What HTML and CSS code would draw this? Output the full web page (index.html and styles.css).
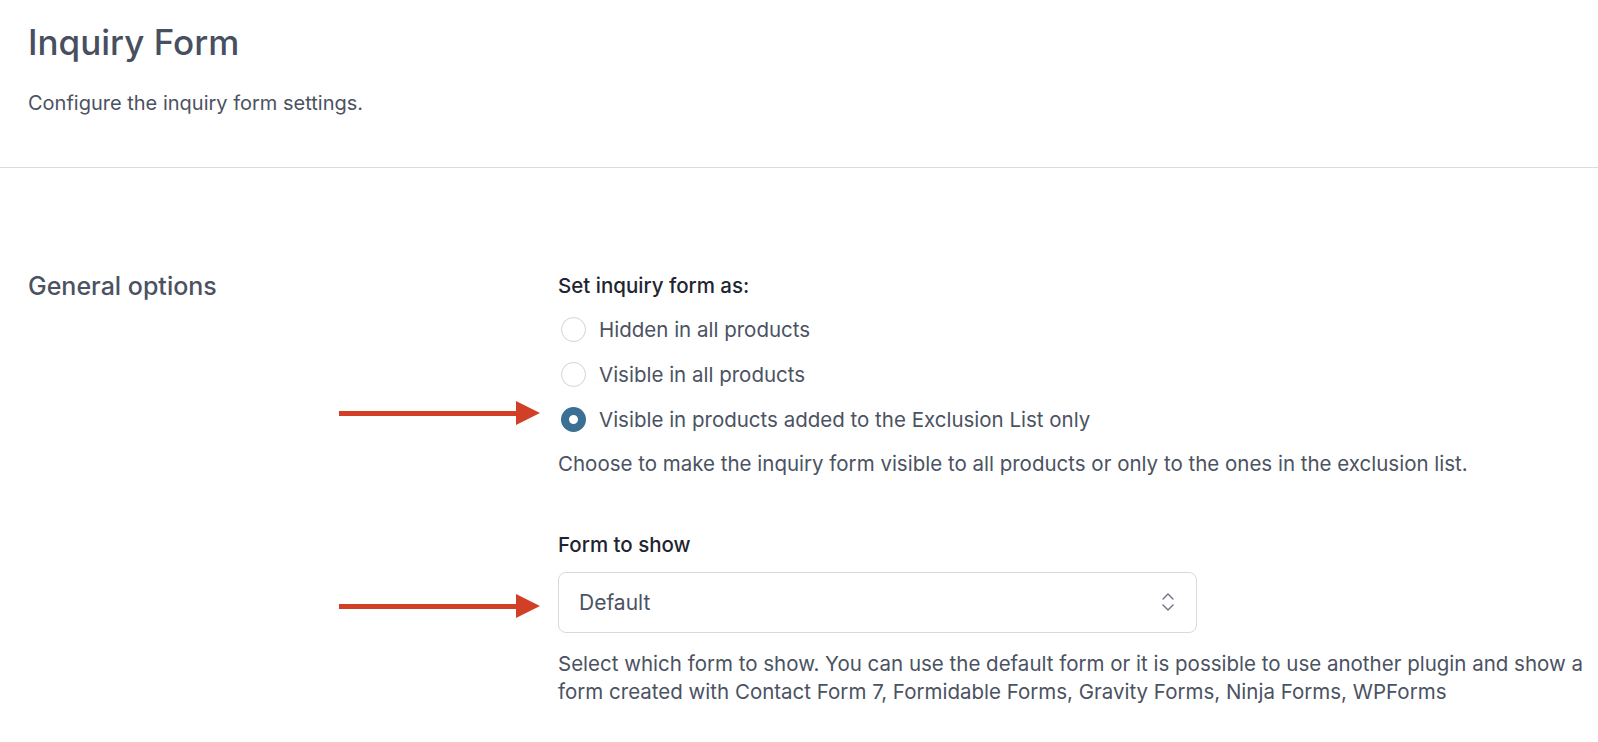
FILE: index.html
```html
<!DOCTYPE html>
<html lang="en">
<head>
    <meta charset="UTF-8">
    <meta name="viewport" content="width=device-width, initial-scale=1.0">
    <title>Inquiry Form</title>
    <link rel="stylesheet" href="styles.css">
</head>
<body>

    <div class="page-header">
        <h1 class="page-title">Inquiry Form</h1>
        <p class="page-desc">Configure the inquiry form settings.</p>
    </div>

    <div class="settings">
        <div class="section">
            <h2 class="section-title">General options</h2>
            <div class="fields">
                <div class="field">
                    <div class="field-label">Set inquiry form as:</div>
                    <div class="radio-list">
                        <label class="radio-row">
                            <input type="radio" name="visibility" class="radio">
                            <span>Hidden in all products</span>
                        </label>
                        <label class="radio-row">
                            <input type="radio" name="visibility" class="radio">
                            <span>Visible in all products</span>
                        </label>
                        <label class="radio-row">
                            <span class="arrow arrow-radio"></span>
                            <input type="radio" name="visibility" class="radio" checked>
                            <span>Visible in products added to the Exclusion List only</span>
                        </label>
                    </div>
                    <p class="help">Choose to make the inquiry form visible to all products or only to the ones in the exclusion list.</p>
                </div>

                <div class="field">
                    <div class="field-label">Form to show</div>
                    <div class="select-wrap">
                        <span class="arrow arrow-select"></span>
                        <select class="select">
                            <option>Default</option>
                        </select>
                        <svg class="select-icon" width="14" height="22" viewBox="0 0 14 22" fill="none" stroke="#6b7280" stroke-width="1.4" stroke-linecap="round" stroke-linejoin="round">
                            <path d="M2 8 L7 3 L12 8"/>
                            <path d="M2 14 L7 19 L12 14"/>
                        </svg>
                    </div>
                    <p class="help help-select">Select which form to show. You can use the default form or it is possible to use another plugin and show a form created with Contact Form 7, Formidable Forms, Gravity Forms, Ninja Forms, WPForms</p>
                </div>
            </div>
        </div>
    </div>

</body>
</html>
```

FILE: styles.css
```css
body {
    font-family: Inter, "Noto Sans", sans-serif;
    background-color: #ffffff;
    color: #4b5262;
    margin: 0;
}

.page-header {
    padding: 20px 28px 50px;
    border-bottom: 1px solid #dcdcdf;
}

.page-title {
    margin: 0;
    font-size: 35px;
    font-weight: 500;
    color: #474f60;
    line-height: 44px;
}

.page-desc {
    margin: 25px 0 0;
    font-size: 20px;
    line-height: 28px;
}

.settings {
    padding: 102px 0 0 28px;
}

.section {
    display: flex;
}

.section-title {
    width: 530px;
    flex-shrink: 0;
    margin: 0;
    font-size: 25px;
    font-weight: 500;
    color: #4b5262;
    line-height: 32px;
}

.fields {
    flex: 1;
}

.field {
    margin-bottom: 52px;
}

.field:last-child {
    margin-bottom: 0;
}

.field-label {
    font-size: 20.5px;
    font-weight: 500;
    color: #1f2530;
    line-height: 28px;
    margin-top: 2px;
}

.radio-list {
    margin-top: 7px;
}

.radio-row {
    position: relative;
    display: flex;
    align-items: center;
    gap: 13px;
    height: 45px;
    font-size: 20.5px;
}

.radio {
    appearance: none;
    width: 25px;
    height: 25px;
    margin: 0 0 0 3px;
    border: 1px solid #cfd3d8;
    border-radius: 50%;
    background: #fff;
}

.radio:checked {
    border: 8px solid #3b6f93;
    background: #fff;
}

.help {
    margin: 8px 0 0;
    font-size: 20.5px;
    line-height: 28.5px;
}

.help-select {
    margin-top: 17px;
}

.select-wrap {
    position: relative;
    width: 639px;
    margin-top: 13px;
}

.select {
    appearance: none;
    display: block;
    width: 100%;
    height: 61px;
    padding: 0 20px;
    border: 1px solid #d6d9de;
    border-radius: 8px;
    background: #fff;
    font-family: inherit;
    font-size: 21px;
    color: #4b5262;
}

.select-icon {
    position: absolute;
    right: 22px;
    top: 19px;
}

.arrow {
    position: absolute;
    left: -219px;
    top: 50%;
    width: 178px;
    height: 5px;
    background: #d13f27;
}

.arrow::after {
    content: "";
    position: absolute;
    right: -23px;
    top: -10px;
    border-left: 24px solid #d13f27;
    border-top: 12px solid transparent;
    border-bottom: 12px solid transparent;
}

.arrow-radio {
    margin-top: -9px;
}

.arrow-select {
    margin-top: 2px;
}
```
